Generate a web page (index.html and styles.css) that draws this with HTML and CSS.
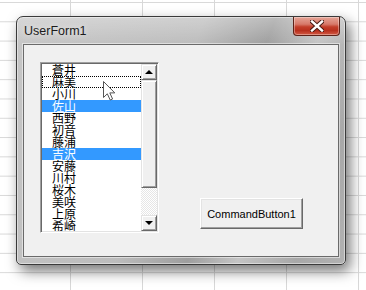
FILE: index.html
```html
<!DOCTYPE html>
<html lang="ja">
<head>
  <meta charset="UTF-8">
  <title>UserForm1</title>
  <link rel="stylesheet" href="styles.css">
</head>
<body>
  <div class="window">
    <!-- タイトルバー -->
    <div class="titlebar">
      <span class="title">UserForm1</span>
      <div class="close">
        <svg width="14" height="12" viewBox="0 0 14 12">
          <path d="M2 1.5 L12 10.5 M12 1.5 L2 10.5" stroke="#4a1a12" stroke-width="4.4" stroke-linecap="square"/>
          <path d="M2 1.5 L12 10.5 M12 1.5 L2 10.5" stroke="#fff" stroke-width="2.4" stroke-linecap="square"/>
        </svg>
      </div>
    </div>

    <!-- フォーム本体 -->
    <div class="client">
      <div class="listbox">
        <ul class="list">
          <li>蒼井</li>
          <li class="focus">麻美</li>
          <li>小川</li>
          <li class="sel">佐山</li>
          <li>西野</li>
          <li>初音</li>
          <li>藤浦</li>
          <li class="sel">吉沢</li>
          <li>安藤</li>
          <li>川村</li>
          <li>桜木</li>
          <li>美咲</li>
          <li>上原</li>
          <li>希崎</li>
          <svg class="cursor" width="13" height="20" viewBox="0 0 13 20">
            <path d="M0.5 0.5 L0.5 16.5 L4.3 12.8 L7.2 19 L9.6 18 L6.8 11.9 L11.8 11.9 Z" fill="#fff" stroke="#555" stroke-width="1"/>
          </svg>
        </ul>
        <div class="scrollbar">
          <div class="sb-btn"><span class="arrow up"></span></div>
          <div class="sb-thumb"></div>
          <div class="sb-track"></div>
          <div class="sb-btn"><span class="arrow down"></span></div>
        </div>
      </div>
      <button class="cmd">CommandButton1</button>
    </div>
  </div>
</body>
</html>
```

FILE: styles.css
```css
/* Excel のシート背景 */
body {
  margin: 0;
  width: 366px;
  height: 290px;
  overflow: hidden;
  background-color: #ffffff;
  background-image:
    linear-gradient(to right, #d8d8d8 1px, transparent 1px),
    linear-gradient(to bottom, #d8d8d8 1px, transparent 1px);
  background-size: 72px 19.3px;
  background-position: -2px 2px;
  font-family: "Liberation Sans", Arial, sans-serif;
}

.window {
  margin: 16px 0 0 16px;
  width: 330px;
  height: 249px;
  box-sizing: border-box;
  border: 1px solid #3a3a3a;
  border-radius: 7px 7px 5px 5px;
  background:
    linear-gradient(to bottom, rgba(255, 255, 255, 0.3), rgba(255, 255, 255, 0) 28px),
    linear-gradient(110deg, #c6c6c6 0%, #bcbcbc 45%, #9e9e9e 62%, #c4c4c4 74%, #a8a8a8 88%, #b2b2b2 100%);
  box-shadow: 4px 6px 14px rgba(0, 0, 0, 0.55), inset 0 0 0 1px rgba(255, 255, 255, 0.45);
  display: flex;
  flex-direction: column;
}

.titlebar {
  height: 27px;
  display: flex;
  align-items: center;
  padding-left: 7px;
}

.title {
  font-size: 12.5px;
  color: #1c1c1c;
  text-shadow: 0 0 6px rgba(255, 255, 255, 0.9);
  margin-top: 1px;
}

.close {
  margin-left: auto;
  margin-right: 5px;
  align-self: flex-start;
  width: 47px;
  height: 19px;
  box-sizing: border-box;
  border: 1px solid #5e2218;
  border-top: none;
  border-radius: 0 0 4px 4px;
  background: linear-gradient(to bottom, #e6a597 0%, #d7796a 40%, #c33e2a 55%, #b8301d 75%, #d25a44 100%);
  box-shadow: inset 0 0 0 1px rgba(255, 255, 255, 0.35);
  display: flex;
  align-items: center;
  justify-content: center;
}

.client {
  flex: 1;
  margin: 0 6px 7px 6px;
  background: #f0f0f0;
  border: 1px solid #6a6a6a;
  box-shadow: 0 0 0 1px rgba(255, 255, 255, 0.5);
  display: flex;
  align-items: flex-start;
  padding: 17px 0 0 16px;
}

/* リストボックス */
.listbox {
  width: 119px;
  height: 171px;
  box-sizing: border-box;
  border: 1px solid;
  border-color: #a0a0a0 #ffffff #ffffff #a0a0a0;
  padding: 1px;
  background: #e3e3e3;
  box-shadow: inset 1px 1px #696969;
  display: flex;
}

.list {
  position: relative;
  list-style: none;
  margin: 0;
  padding: 0;
  width: 99px;
  height: 167px;
  overflow: hidden;
  background: #ffffff;
  font-family: "Noto Sans CJK JP", sans-serif;
  font-size: 12px;
}

.list li {
  height: 12px;
  line-height: 12px;
  padding-left: 10px;
  color: #000000;
  box-sizing: border-box;
}

.list li.sel {
  background: #3399ff;
  color: #ffffff;
}

.list li.focus {
  outline: 1px dotted #000000;
  outline-offset: -1px;
}

.cursor {
  position: absolute;
  left: 61px;
  top: 17px;
}

.scrollbar {
  width: 16px;
  height: 167px;
  display: flex;
  flex-direction: column;
}

.sb-btn, .sb-thumb {
  box-sizing: border-box;
  background: #f0f0f0;
  border: 1px solid;
  border-color: #e3e3e3 #696969 #696969 #e3e3e3;
  box-shadow: inset 1px 1px #ffffff, inset -1px -1px #a0a0a0;
}

.sb-btn {
  height: 16px;
  display: flex;
  align-items: center;
  justify-content: center;
}

.sb-thumb {
  height: 108px;
}

.sb-track {
  height: 27px;
  background-color: #ffffff;
  background-image: repeating-conic-gradient(#e6e6e6 0 25%, #ffffff 0 50%);
  background-size: 2px 2px;
}

.arrow {
  width: 0;
  height: 0;
  border-left: 4px solid transparent;
  border-right: 4px solid transparent;
}

.arrow.up {
  border-bottom: 4px solid #000000;
  margin-top: -1px;
}

.arrow.down {
  border-top: 4px solid #000000;
}

/* コマンドボタン */
.cmd {
  margin: 136px 0 0 41px;
  width: 103px;
  height: 31px;
  box-sizing: border-box;
  background: #f0f0f0;
  border: 1px solid;
  border-color: #ffffff #696969 #696969 #ffffff;
  box-shadow: inset -1px -1px #a0a0a0, inset 1px 1px #e3e3e3;
  font-family: "Liberation Sans", Arial, sans-serif;
  font-size: 11px;
  color: #000000;
  padding: 0;
}
```
